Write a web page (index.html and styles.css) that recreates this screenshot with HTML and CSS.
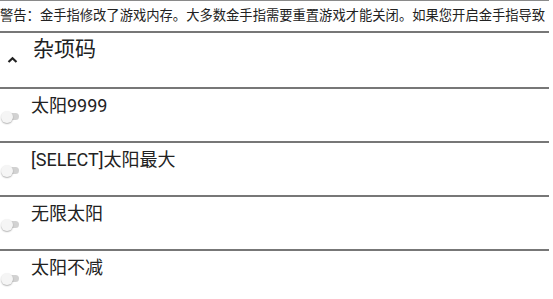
FILE: index.html
```html
<!DOCTYPE html>
<html lang="zh">
<head>
<meta charset="utf-8">
<link rel="stylesheet" href="styles.css">
</head>
<body>
<div class="page">
  <div class="warn">警告：金手指修改了游戏内存。大多数金手指需要重置游戏才能关闭。如果您开启金手指导致</div>
  <div class="group">
    <span class="chev"><svg width="11" height="7" viewBox="0 0 11 7"><path d="M1.5 6 L5.5 2.3 L9.5 6" fill="none" stroke="#222" stroke-width="2.2"/></svg></span>
    <span class="group-title">杂项码</span>
  </div>
  <div class="row"><span class="toggle"><span class="thumb"></span></span><span class="label">太阳9999</span></div>
  <div class="row"><span class="toggle"><span class="thumb"></span></span><span class="label">[SELECT]太阳最大</span></div>
  <div class="row"><span class="toggle"><span class="thumb"></span></span><span class="label">无限太阳</span></div>
  <div class="row last"><span class="toggle"><span class="thumb"></span></span><span class="label">太阳不减</span></div>
</div>
</body>
</html>
```
FILE: styles.css
```css
html, body {
  margin: 0;
  padding: 0;
  background: #fff;
}
body {
  font-family: Roboto, "Noto Sans CJK SC", sans-serif;
  color: #222;
  overflow: hidden;
}
.page {
  width: 549px;
}
.warn {
  height: 30px;
  border-top: 1px solid #8a8a8a;
  border-bottom: 2px solid #777;
  font-size: 13.3px;
  line-height: 30px;
  white-space: nowrap;
  overflow: hidden;
}
.group {
  height: 54px;
  border-bottom: 2px solid #777;
  display: flex;
  align-items: flex-start;
}
.chev {
  width: 11px;
  margin-left: 7px;
  margin-top: 23px;
  display: flex;
}
.group-title {
  font-size: 21px;
  margin-left: 15px;
  margin-top: 1px;
  line-height: 30px;
}
.row {
  height: 52px;
  border-bottom: 2px solid #777;
  display: flex;
  align-items: flex-start;
}
.row.last {
  border-bottom: none;
}
.toggle {
  position: relative;
  width: 17px;
  height: 7px;
  margin-left: 2px;
  margin-top: 24px;
  background: #d2d2d2;
  border-radius: 3.5px;
}
.thumb {
  position: absolute;
  left: -1px;
  top: -2.5px;
  width: 12px;
  height: 12px;
  border-radius: 50%;
  background: #f5f5f5;
  box-shadow: 0 1px 1.5px rgba(0,0,0,0.3);
}
.label {
  font-size: 18px;
  margin-left: 12px;
  margin-top: 5px;
  line-height: 24px;
}
```
